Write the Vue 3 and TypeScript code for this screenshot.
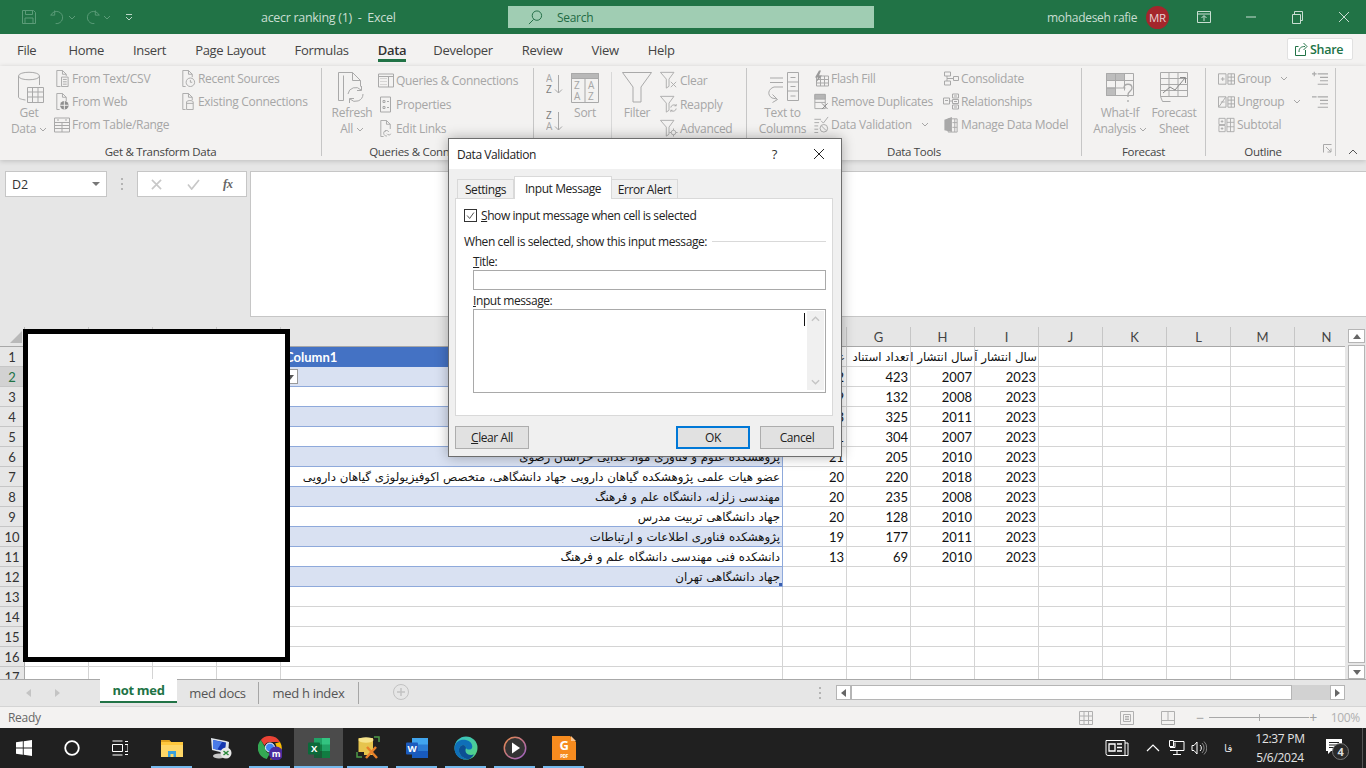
<script setup lang="ts">
interface Item {
  icon: string
  label: string
  chev?: boolean
}

interface Row {
  n: number
  text?: string
  f?: string
  g?: string
  h?: string
  i?: string
}

const tabs = ['File', 'Home', 'Insert', 'Page Layout', 'Formulas', 'Data', 'Developer', 'Review', 'View', 'Help']

const fromItems: Item[] = [
  { icon: 'i-csv', label: 'From Text/CSV' },
  { icon: 'i-web', label: 'From Web' },
  { icon: 'i-table', label: 'From Table/Range' }
]
const recentItems: Item[] = [
  { icon: 'i-recent', label: 'Recent Sources' },
  { icon: 'i-existing', label: 'Existing Connections' }
]
const queryItems: Item[] = [
  { icon: 'i-queries', label: 'Queries & Connections' },
  { icon: 'i-props', label: 'Properties' },
  { icon: 'i-links', label: 'Edit Links' }
]
const filterItems: Item[] = [
  { icon: 'i-clear', label: 'Clear' },
  { icon: 'i-reapply', label: 'Reapply' },
  { icon: 'i-advanced', label: 'Advanced' }
]
const toolItems: Item[] = [
  { icon: 'i-flash', label: 'Flash Fill' },
  { icon: 'i-dupes', label: 'Remove Duplicates' },
  { icon: 'i-valid', label: 'Data Validation', chev: true }
]
const relItems: Item[] = [
  { icon: 'i-consol', label: 'Consolidate' },
  { icon: 'i-rel', label: 'Relationships' },
  { icon: 'i-model', label: 'Manage Data Model' }
]
const outlineItems: Item[] = [
  { icon: 'i-group', label: 'Group', chev: true },
  { icon: 'i-ungroup', label: 'Ungroup', chev: true },
  { icon: 'i-subtotal', label: 'Subtotal' }
]

const letters = ['A', 'B', 'C', 'D', 'E', 'F', 'G', 'H', 'I', 'J', 'K', 'L', 'M', 'N']

const data: Row[] = [
  { n: 1, text: 'Column1', f: 'عدد', g: 'تعداد استناد', h: 'سال انتشار اولین', i: 'سال انتشار آخرین' },
  { n: 2, f: '22', g: '423', h: '2007', i: '2023' },
  { n: 3, f: '19', g: '132', h: '2008', i: '2023' },
  { n: 4, f: '23', g: '325', h: '2011', i: '2023' },
  { n: 5, f: '21', g: '304', h: '2007', i: '2023' },
  { n: 6, text: 'پژوهشکده علوم و فناوری مواد غذایی خراسان رضوی', f: '21', g: '205', h: '2010', i: '2023' },
  { n: 7, text: 'عضو هیات علمی پژوهشکده گیاهان دارویی جهاد دانشگاهی، متخصص اکوفیزیولوژی گیاهان دارویی', f: '20', g: '220', h: '2018', i: '2023' },
  { n: 8, text: 'مهندسی زلزله، دانشگاه علم و فرهنگ', f: '20', g: '235', h: '2008', i: '2023' },
  { n: 9, text: 'جهاد دانشگاهی تربیت مدرس', f: '20', g: '128', h: '2010', i: '2023' },
  { n: 10, text: 'پژوهشکده فناوری اطلاعات و ارتباطات', f: '19', g: '177', h: '2011', i: '2023' },
  { n: 11, text: 'دانشکده فنی مهندسی دانشگاه علم و فرهنگ', f: '13', g: '69', h: '2010', i: '2023' },
  { n: 12, text: 'جهاد دانشگاهی تهران' },
  { n: 13 },
  { n: 14 },
  { n: 15 },
  { n: 16 },
  { n: 17 }
]
</script>

<template>
  <div class="app">
    <!-- icon sprite -->
    <svg class="sprite" xmlns="http://www.w3.org/2000/svg">
      <symbol id="i-chev" viewBox="0 0 8 5"><path d="M1 1l3 3 3-3" fill="none" stroke="currentColor" /></symbol>
      <symbol id="i-csv" viewBox="0 0 16 18"><path d="M2.5 17.5V.5h6l4 4v2M8.5.5v4h4M2.5 17.5h4" /><path d="M7.5 7.5h7v10h-7zM9 10h4M9 12.5h4M9 15h4" /></symbol>
      <symbol id="i-web" viewBox="0 0 16 18"><path d="M2.5 17.5V.5h6l4 4v4M8.5.5v4h4M2.5 17.5h3" /><circle cx="10.5" cy="13" r="4.5" fill="#8f8f8f" stroke="none" /><path d="M6 13h9M10.5 8.5v9" stroke="#f3f2f1" /></symbol>
      <symbol id="i-table" viewBox="0 0 16 16"><path d="M.5 1.5h15v14H.5zM.5 6h15M.5 9h15M.5 12h15M8 6v9.5" /><path d="M3 3.5h2M11 3.5h2" /></symbol>
      <symbol id="i-recent" viewBox="0 0 16 18"><path d="M2.5 17.5V.5h6l4 4v3M8.5.5v4h4M2.5 17.5h3" /><circle cx="10.5" cy="13" r="4.5" /><path d="M10.5 10.5V13h2" /></symbol>
      <symbol id="i-existing" viewBox="0 0 16 18"><path d="M2.5 17.5V.5h6l4 4v3M8.5.5v4h4M2.5 17.5h3" /><path d="M6.5 9.5a3.5 1.5 0 0 1 7 0v8h-7zM6.5 11h7" /></symbol>
      <symbol id="i-queries" viewBox="0 0 16 16"><path d="M.5 1.5h15v13H.5zM.5 4h15M10.5 4v10.5" /><path d="M2 6h7M2 9h7M2 12h7" stroke-opacity=".4" /></symbol>
      <symbol id="i-props" viewBox="0 0 16 16"><path d="M2.5.5h10v15h-10zM5 4h2v2H5zM5 10h2v2H5zM9 5h2M9 11h2" /></symbol>
      <symbol id="i-links" viewBox="0 0 16 18"><path d="M2.5 17.5V.5h6l4 4v5M8.5.5v4h4M2.5 17.5h3" /><path d="M7 12.5a2 2 0 0 1 3-1l1 1M13 14.5a2 2 0 0 1-3 1l-1-1M8 11a3 3 0 0 0-2 4.5 3 3 0 0 0 3 1.5" /></symbol>
      <symbol id="i-clear" viewBox="0 0 20 20"><path d="M.5 1.5h15L10 9v8l-3 2V9z" /><path d="M12 12l6 6M18 12l-6 6" /></symbol>
      <symbol id="i-reapply" viewBox="0 0 20 20"><path d="M.5 1.5h15L10 9v8l-3 2V9z" /><path d="M12 14a3.5 3.5 0 0 1 6-2M18 15a3.5 3.5 0 0 1-6 2M18 10v2h-2M12 19v-2h2" /></symbol>
      <symbol id="i-advanced" viewBox="0 0 20 20"><path d="M.5 1.5h15L10 9v8l-3 2V9z" /><circle cx="15" cy="15" r="2.5" /><path d="M15 10.5v2M15 17.5v2M10.5 15h2M17.5 15h2" /></symbol>
      <symbol id="i-flash" viewBox="0 0 16 16"><path d="M3.5 5.5h12v10h-12zM7.5 5.5v10M11.5 5.5v10M3.5 9h12M3.5 12.5h12" /><path d="M6 0L2 7h3l-2 5 6-7H6l2-5z" fill="#9a9a9a" stroke="none" /></symbol>
      <symbol id="i-dupes" viewBox="0 0 16 18"><path d="M1.5 1.5h11v15h-11z" /><path d="M1.5 1.5h11v5h-11z" fill="#b5b5b5" /><path d="M1.5 10h11" /><path d="M9 11l6 6M15 11l-6 6" stroke="#8a8a8a" /></symbol>
      <symbol id="i-valid" viewBox="0 0 16 18"><path d="M1 3.5h7M1 7h5M1 10.5h4M1 14h4M1 17.5h4" /><path d="M8 5l2.5 2.5L15.5 1" /><circle cx="11" cy="13" r="4" /><path d="M8.5 10.5l5 5" /></symbol>
      <symbol id="i-consol" viewBox="0 0 16 16"><path d="M1.5 1.5h6v4h-6zM1.5 10.5h6v4h-6zM4 5.5V8h3M4 10.5V8" /><path d="M10.5 6h5v4h-5z" /><path d="M7 8h3" /></symbol>
      <symbol id="i-rel" viewBox="0 0 16 16"><path d="M.5 4.5h6v6h-6zM9.5.5h6v4h-6zM9.5 6h6v4h-6zM9.5 11.5h6v4h-6zM6.5 7.5h3M2 7h3M11 2.5h3M11 8h3M11 13.5h3" /></symbol>
      <symbol id="i-model" viewBox="0 0 16 18"><path d="M5 3h9.5v14H5z" /><path d="M1 4l8-3v16l-8-2z" fill="#a8a8a8" stroke="none" /><path d="M9.5 7h5M9.5 12h5M12 3v14" /></symbol>
      <symbol id="i-group" viewBox="0 0 18 16"><path d="M.5 2.5h8v11h-8zM3 8h4M5 6v4M10.5 2.5h7v11h-7zM10.5 6h7M10.5 10h7M14 2.5v11" /></symbol>
      <symbol id="i-ungroup" viewBox="0 0 18 16"><path d="M.5 2.5h8v11h-8zM3 8h4M1 13l7-10M10.5 2.5h7v11h-7zM10.5 6h7M10.5 10h7M14 2.5v11" /></symbol>
      <symbol id="i-subtotal" viewBox="0 0 18 18"><path d="M.5 1.5h7v7h-7zM.5 9.5h7v7h-7zM2.5 5h3M4 3.5v3M2.5 13h3M4 11.5v3M9.5 1.5h8v15h-8zM9.5 6h8M9.5 11h8M13.5 1.5v15" /></symbol>
      <symbol id="i-show" viewBox="0 0 14 14"><path d="M5 3h9M7 6h7M7 9h7M5 12h9M0 3h4M2 1v4" /></symbol>
      <symbol id="i-hide" viewBox="0 0 14 14"><path d="M5 3h9M7 6h7M7 9h7M5 12h9M0 3h4" /></symbol>
    </svg>

    <header class="titlebar">
      <div class="qat">
        <svg class="qat-save" viewBox="0 0 16 16"><path d="M1.5 1.5h11l2 2v11h-13zM4.5 1.5v4h7v-4M4 14.5V9h8v5.5" /></svg>
        <svg class="qat-undo" viewBox="0 0 16 16"><path d="M5 1v5H.5M1 6a6.5 6.5 0 1 1 5 9" /></svg>
        <svg class="qat-chev"><use href="#i-chev" /></svg>
        <svg class="qat-redo" viewBox="0 0 16 16"><path d="M11 1v5h4.5M15 6a6.5 6.5 0 1 0-5 9" /></svg>
        <svg class="qat-chev"><use href="#i-chev" /></svg>
        <svg class="qat-more" viewBox="0 0 8 8"><path d="M1 1.5h6M1 4l3 3 3-3" /></svg>
      </div>
      <div class="doc-name">acecr ranking (1)&nbsp; -&nbsp; Excel</div>
      <div class="search">
        <svg viewBox="0 0 16 16"><circle cx="9.5" cy="6" r="5" /><path d="M6 10l-5 5" /></svg>
        <span>Search</span>
      </div>
      <div class="user">mohadeseh rafie</div>
      <div class="avatar">MR</div>
      <div class="caption">
        <svg viewBox="0 0 14 14"><path d="M.5 1.5h13v11H.5zM.5 4h13M7 11V6M4.5 8L7 5.5 9.5 8" /></svg>
        <svg viewBox="0 0 14 14"><path d="M2 7h10" /></svg>
        <svg viewBox="0 0 14 14"><path d="M2.5 4.5h8v9h-8zM4.5 4.5v-3h8v9h-2" /></svg>
        <svg viewBox="0 0 14 14"><path d="M2 2l10 10M12 2L2 12" /></svg>
      </div>
    </header>

    <nav class="tabbar">
      <div v-for="t in tabs" :key="t" class="tab" :class="{ active: t === 'Data' }">{{ t }}</div>
      <div class="share">
        <svg viewBox="0 0 14 14"><path d="M1.5 4.5h3M1.5 4.5v9h10V8" /><path d="M5 10c0-4 2-5.5 6-5.5M9.5 1L13 4.5 9.5 8" /></svg>
        Share
      </div>
    </nav>

    <section class="ribbon">
      <div class="group g-get">
        <div class="g-body">
          <div class="big w-get">
            <svg class="big-ic" viewBox="0 0 30 35"><path d="M4.5 6c0-5 21-5 21 0v9M4.5 6c0 5 21 5 21 0M4.5 6v21c0 1.5 3 2.5 7 3" /><path d="M13.5 17.5h16v15h-16zM13.5 22h16M13.5 27h16M18.5 17.5v15M24 17.5v15" /></svg>
            <span>Get</span>
            <span>Data <svg class="chev"><use href="#i-chev" /></svg></span>
          </div>
          <div class="col w-from">
            <div v-for="it in fromItems" :key="it.label" class="item"><svg class="ic"><use :href="'#' + it.icon" /></svg>{{ it.label }}</div>
          </div>
          <div class="col">
            <div v-for="it in recentItems" :key="it.label" class="item"><svg class="ic"><use :href="'#' + it.icon" /></svg>{{ it.label }}</div>
          </div>
        </div>
        <div class="g-label">Get &amp; Transform Data</div>
      </div>

      <div class="group g-query">
        <div class="g-body">
          <div class="big w-refresh">
            <svg class="big-ic" viewBox="0 0 30 35"><path d="M6.5 30.5h-5V2.5h14l8 8v6M15.5 2.5v8h8M6.5 5.5v25" /><path d="M11 24a7.5 7.5 0 0 1 13-4M26 24a7.5 7.5 0 0 1-13 5M24.5 16v4.5H20M12.5 33v-4.5H17" /></svg>
            <span>Refresh</span>
            <span>All <svg class="chev"><use href="#i-chev" /></svg></span>
          </div>
          <div class="col tall">
            <div v-for="it in queryItems" :key="it.label" class="item"><svg class="ic"><use :href="'#' + it.icon" /></svg>{{ it.label }}</div>
          </div>
        </div>
        <div class="g-label">Queries &amp; Connections</div>
      </div>

      <div class="group g-sort">
        <div class="g-body">
          <div class="col az">
            <svg class="az-ic" viewBox="0 0 17 24"><text x="0" y="10" class="az-t">A</text><text x="0" y="21" class="az-d">Z</text><path d="M12.5 3v18M9 17.5l3.5 3.5 3.5-3.5" /></svg>
            <svg class="az-ic" viewBox="0 0 17 24"><text x="0" y="10" class="az-d">Z</text><text x="0" y="21" class="az-t">A</text><path d="M12.5 3v18M9 17.5l3.5 3.5 3.5-3.5" /></svg>
          </div>
          <div class="big w-sort">
            <svg class="big-ic" viewBox="0 0 30 35"><path d="M1.5 3.5h27v29h-27zM15 8v24.5" /><path d="M1.5 3.5h27v5h-27z" fill="#b8b8b8" /><text x="4" y="19" class="az-l">Z</text><text x="4" y="30" class="az-l">A</text><text x="18" y="19" class="az-l">A</text><text x="18" y="30" class="az-l">Z</text></svg>
            <span>Sort</span>
          </div>
          <div class="divider"></div>
          <div class="big w-filter">
            <svg class="big-ic" viewBox="0 0 30 35"><path d="M.5 2.5h29L19 17v15h-8V17z" /></svg>
            <span>Filter</span>
          </div>
          <div class="col tall filters">
            <div v-for="it in filterItems" :key="it.label" class="item"><svg class="ic ic-lg"><use :href="'#' + it.icon" /></svg>{{ it.label }}</div>
          </div>
        </div>
        <div class="g-label">Sort &amp; Filter</div>
      </div>

      <div class="group g-tools">
        <div class="g-body">
          <div class="big w-ttc">
            <svg class="big-ic" viewBox="0 0 34 35"><path d="M4 8h13M4 12.5h13M8 17h9M21.5 2.5h11v28h-11zM21.5 12h11M21.5 21h11M24.5 7.5h5M24.5 16.5h5M24.5 26h5" /><path d="M8 17c-6 2-7 8-2 11l5 1M6.5 24.5l5 5-5 3" /></svg>
            <span>Text to</span>
            <span>Columns</span>
          </div>
          <div class="col w-flash">
            <div v-for="it in toolItems" :key="it.label" class="item"><svg class="ic"><use :href="'#' + it.icon" /></svg>{{ it.label }}<svg v-if="it.chev" class="chev chev-far"><use href="#i-chev" /></svg></div>
          </div>
          <div class="col">
            <div v-for="it in relItems" :key="it.label" class="item"><svg class="ic"><use :href="'#' + it.icon" /></svg>{{ it.label }}</div>
          </div>
        </div>
        <div class="g-label">Data Tools</div>
      </div>

      <div class="group g-forecast">
        <div class="g-body">
          <div class="big w-whatif">
            <svg class="big-ic" viewBox="0 0 30 35"><path d="M1.5 3.5h27v22h-27z" /><path d="M1.5 3.5h18v7h-18zM1.5 18h9v7.5h-9z" fill="#bdbdbd" /><path d="M1.5 10.5h27M1.5 18h19M10.5 3.5v22M19.5 3.5v17" /><path d="M19 18c0-5 8-5 8 0 0 3-4 3-4 7v2M23 30v2" stroke-width="1.3" /></svg>
            <span>What-If</span>
            <span>Analysis <svg class="chev"><use href="#i-chev" /></svg></span>
          </div>
          <div class="big w-sheet">
            <svg class="big-ic" viewBox="0 0 30 35"><path d="M1.5 2.5h27v24h-27zM1.5 8.5h27M1.5 14.5h27M1.5 20.5h27M10 2.5v24M19 2.5v24" /><path d="M4 23l7-6 5 3 10-12M21 7.5h5.5V13" stroke="#8a8a8a" /><path d="M1.5 26.5l2 5h8" /></svg>
            <span>Forecast</span>
            <span>Sheet</span>
          </div>
        </div>
        <div class="g-label">Forecast</div>
      </div>

      <div class="group g-outline">
        <div class="g-body">
          <div class="col w-outline">
            <div v-for="it in outlineItems" :key="it.label" class="item"><svg class="ic ic-wide"><use :href="'#' + it.icon" /></svg>{{ it.label }}<svg v-if="it.chev" class="chev chev-out"><use href="#i-chev" /></svg></div>
          </div>
          <div class="col">
            <div class="item"><svg class="ic"><use href="#i-show" /></svg></div>
            <div class="item"><svg class="ic"><use href="#i-hide" /></svg></div>
          </div>
        </div>
        <div class="g-label label-outline">Outline</div>
        <svg class="launcher" viewBox="0 0 9 9"><path d="M.5 8.5v-8h8M3 3l5 5M8 4.5V8H4.5" /></svg>
      </div>

      <svg class="collapse" viewBox="0 0 10 6"><path d="M1 5l4-4 4 4" /></svg>
    </section>

    <section class="formula">
      <div class="namebox">D2<i class="nb-caret"></i></div>
      <div class="dots"><b></b><b></b><b></b></div>
      <div class="fx-box">
        <svg viewBox="0 0 12 12"><path d="M1 1l10 10M11 1L1 11" /></svg>
        <svg viewBox="0 0 14 12"><path d="M1 6l4 5 8-10" /></svg>
        <span>fx</span>
      </div>
      <div class="fbar"></div>
    </section>

    <section class="sheet">
      <div class="grid">
        <div class="row head">
          <div class="corner"><i></i></div>
          <div v-for="l in letters" :key="l" class="col-head">{{ l }}</div>
        </div>
        <div v-for="r in data" :key="r.n" class="row">
          <div class="row-head" :class="{ sel: r.n === 2 }">{{ r.n }}</div>
          <div class="cell"></div>
          <div class="cell"></div>
          <div class="cell"></div>
          <div class="cell"></div>
          <div
            class="cell main"
            :class="{
              thead: r.n === 1,
              band: r.n > 1 && r.n <= 12 && r.n % 2 === 0,
              plain: r.n > 1 && r.n < 12 && r.n % 2 === 1
            }"
          >
            <template v-if="r.n === 1">{{ r.text }}</template>
            <span v-else-if="r.text" class="fa">{{ r.text }}</span>
            <i v-if="r.n === 2" class="dv-drop"></i>
            <i v-if="r.n === 12" class="handle"></i>
          </div>
          <template v-if="r.n === 1">
            <div class="cell fa-head"><span>{{ r.f }}</span></div>
            <div class="cell fa-head"><span>{{ r.g }}</span></div>
            <div class="cell fa-head"><span>{{ r.h }}</span></div>
            <div class="cell fa-head"><span>{{ r.i }}</span></div>
          </template>
          <template v-else>
            <div class="cell num">{{ r.f }}</div>
            <div class="cell num">{{ r.g }}</div>
            <div class="cell num">{{ r.h }}</div>
            <div class="cell num">{{ r.i }}</div>
          </template>
          <div class="cell"></div>
          <div class="cell"></div>
          <div class="cell"></div>
          <div class="cell"></div>
          <div class="cell"></div>
        </div>
      </div>
      <div class="vscroll">
        <div class="sb-btn"><i class="tri up"></i></div>
        <div class="sb-thumb"></div>
        <div class="sb-btn"><i class="tri down"></i></div>
      </div>
    </section>

    <section class="sheettabs">
      <div class="nav"><i class="tri left"></i><i class="tri right"></i></div>
      <div class="stab on">not med</div>
      <div class="stab docs">med docs</div>
      <div class="stab hidx">med h index</div>
      <div class="plus">
        <svg viewBox="0 0 16 16"><circle cx="8" cy="8" r="7.5" /><path d="M8 4v8M4 8h8" stroke-width="1.5" /></svg>
      </div>
      <div class="dots hdots"><b></b><b></b><b></b></div>
      <div class="hscroll">
        <div class="hs-btn"><i class="tri left dark"></i></div>
        <div class="hs-thumb"></div>
        <div class="hs-track"></div>
        <div class="hs-btn"><i class="tri right dark"></i></div>
      </div>
    </section>

    <footer class="status">
      <span class="ready">Ready</span>
      <div class="views">
        <svg viewBox="0 0 14 16"><path d="M.5 1.5h13v13H.5zM.5 6h13M.5 10.5h13M5 1.5v13M9.500 1.5v13" /></svg>
        <svg viewBox="0 0 14 16"><path d="M.5 1.5h13v13H.5zM3.5 4.5h7v7h-7zM5 6.5h4M5 8h4M5 9.500h4" /></svg>
        <svg viewBox="0 0 14 16"><path d="M.5 1.5h13v13H.5zM.5 10.5h6.5V1.5M7 10.5h6.5" /></svg>
      </div>
      <div class="zoom">
        <span class="z-sign">−</span>
        <div class="z-track"><i></i></div>
        <span class="z-sign">+</span>
        <span class="z-pct">100%</span>
      </div>
    </footer>

    <div class="taskbar">
      <div class="tb-sys">
        <svg viewBox="0 0 16 16" fill="#fff"><path d="M0 2.3l6.8-1v6.3H0zM7.7 1.2L16 0v7.6H7.7zM0 8.5h6.8v6.3l-6.8-1zM7.7 8.5H16V16l-8.3-1.2z" /></svg>
      </div>
      <div class="tb-sys">
        <svg class="ring" viewBox="0 0 16 16"><circle cx="8" cy="8" r="6.8" fill="none" stroke="#fff" stroke-width="1.8" /></svg>
      </div>
      <div class="tb-sys">
        <svg class="tview" viewBox="0 0 16 16" fill="none" stroke="#fff"><path d="M.5 1h10M.5 15h10M.5 4.5h10v7H.5zM13 1.5h3M13 4.5h3v7h-3M13 14.5h3" /></svg>
      </div>
      <div class="apps">
        <div class="app-i run">
          <svg viewBox="0 0 24 24"><path d="M1 4h8l2 2h12v15H1z" fill="#ffc83d" /><path d="M1 4h8l2 2H1z" fill="#e0a21f" /><path d="M1 9h22v12H1z" fill="#ffd767" /><path d="M8 15h8v6h-2.5v-3h-3v3H8z" fill="#3aa0dc" /></svg>
        </div>
        <div class="app-i">
          <svg viewBox="0 0 24 24"><path d="M2 2l15 3 3 1-1 12-16-4z" fill="#dfe4ea" /><path d="M4 4l13 2.5-1 9L4 12.5z" fill="#1437b0" /><path d="M4 4l9 2-5 8-4-1.5z" fill="#4a7be8" /><ellipse cx="10" cy="20" rx="6" ry="2.5" fill="#c8c8c8" /><circle cx="17" cy="17" r="5.5" fill="#e8e8e8" /><path d="M14.5 15l5 4M19.5 15l-5 4" stroke="#2c8a3d" stroke-width="1.5" /></svg>
        </div>
        <div class="app-i run">
          <svg viewBox="0 0 24 24"><path d="M12 0a11.5 11.5 0 0 1 10 6H12a6 6 0 0 0-5.5 3.5L2.8 4A11.5 11.5 0 0 1 12 0z" fill="#ea4335" /><path d="M2.8 4l5 8.5a5 5 0 0 0 4 5l-3 5.5A11.5 11.5 0 0 1 2.8 4z" fill="#34a853" /><path d="M22 6a11.5 11.5 0 0 1-10 17.5l5-9a5 5 0 0 0 0-7z" fill="#fbbc05" /><circle cx="12" cy="11.5" r="4.5" fill="#4285f4" stroke="#fff" /><circle cx="18" cy="17.5" r="7" fill="#4a2c9e" /><text x="18" y="21" class="tb-m">m</text></svg>
        </div>
        <div class="app-i active">
          <svg viewBox="0 0 24 24"><path d="M7 2h16v20H7z" fill="#21a366" /><path d="M15 2h8v6.5h-8z" fill="#33c481" /><path d="M7 8.5h8V15H7z" fill="#107c41" /><path d="M7 15h8v7H7z" fill="#185c37" /><path d="M15 15h8v7h-8z" fill="#107c41" /><rect x="1" y="6.5" width="12" height="12" rx="1" fill="#0b6a3a" /><text x="7" y="16" class="tb-l">X</text></svg>
        </div>
        <div class="app-i run">
          <svg viewBox="0 0 24 24"><path d="M2.5 2H17v17H8v-3H2.5z" fill="#e6c44d" /><ellipse cx="10" cy="4" rx="7.5" ry="2.7" fill="#f6e38a" /><path d="M1 16v5h5M18 1h5v5" fill="none" stroke="#4d9a48" stroke-width="1.5" /><path d="M10 22l10-11M21 22L11 11" stroke="#e8812a" stroke-width="2.5" /></svg>
        </div>
        <div class="app-i run">
          <svg viewBox="0 0 24 24"><path d="M7 2h16v20H7z" fill="#41a5ee" /><path d="M7 8.5h16V15H7z" fill="#2b7cd3" /><path d="M7 15h16v7H7z" fill="#185abd" /><rect x="1" y="6.5" width="12" height="12" rx="1" fill="#1c5bbd" /><text x="7" y="16" class="tb-l">W</text></svg>
        </div>
        <div class="app-i run">
          <svg viewBox="0 0 24 24"><defs><linearGradient id="edgeg" x1="0" y1="0" x2="1" y2="1"><stop offset="0" stop-color="#35c1c9" /><stop offset="1" stop-color="#58d47c" /></linearGradient></defs><circle cx="12" cy="12" r="11.5" fill="url(#edgeg)" /><path d="M.5 12C1 5 7 3 12 4c5 1 7 5 6 8-1 2-5 2-6 0 0-4-6-4-7 1-1 5 4 10 10 10.2C7 25 .5 20 .5 12z" fill="#0f6fb8" /><path d="M5 13c1-5 7-5 7-1-2 5 2 8 8 6.5a11.5 11.5 0 0 1-5 4.7C9 23 4 18 5 13z" fill="#0c4f94" /></svg>
        </div>
        <div class="app-i run">
          <svg viewBox="0 0 24 24"><defs><linearGradient id="playg" x1="0" y1="0" x2="1" y2="1"><stop offset="0" stop-color="#e88a4a" /><stop offset="1" stop-color="#9a5fc7" /></linearGradient></defs><circle cx="12" cy="12" r="10.7" fill="#333" stroke="url(#playg)" stroke-width="1.5" /><path d="M9 6.5l8 5.500-8 5.500z" fill="#fff" /></svg>
        </div>
        <div class="app-i run">
          <svg viewBox="0 0 24 24"><path d="M0 0h18l6 6v18H0z" fill="#f68b1f" /><path d="M19 0l5 5h-5z" fill="#fbc28a" /><text x="12" y="14" class="tb-g">G</text><text x="12" y="21.5" class="tb-p">PDF</text></svg>
        </div>
      </div>
      <div class="tray">
        <svg class="t-news" viewBox="0 0 24 18" fill="none" stroke="#fff"><path d="M1 1.5h19v15H3a2 2 0 0 1-2-2zM20 4h3v12.5h-3" /><path d="M4 5h6v7H4zM12 5h5M12 8.5h5M12 12h5" stroke-width="1.3" /></svg>
        <svg class="t-up" viewBox="0 0 14 8" fill="none" stroke="#fff"><path d="M1 7l6-6 6 6" stroke-width="1.2" /></svg>
        <svg class="t-net" viewBox="0 0 16 16" fill="none" stroke="#fff"><path d="M4 1.5h11v9H1M1 7.5h5v-5M8 10.5v4M4 14.5h8" /><path d="M.5.5h4v6h-4z" /></svg>
        <svg class="t-vol" viewBox="0 0 16 16" fill="none" stroke="#fff"><path d="M1 5.5h2L6 2v12l-3-3.5H1zM9 5a4 4 0 0 1 0 6" /><path d="M11 3a7 7 0 0 1 0 10M13 1.5a9 9 0 0 1 0 13" stroke-opacity=".45" /></svg>
        <span class="t-fa">فا</span>
        <div class="clock"><span>12:37 PM</span><span>5/6/2024</span></div>
        <div class="notif">
          <svg viewBox="0 0 16 16"><path d="M0 0h16v12H5l-3 3v-3H0z" fill="#fff" /><path d="M3 3.5h10M3 6h10M3 8.5h7" stroke="#222" /></svg>
          <span class="badge">4</span>
        </div>
        <div class="show-desk"></div>
      </div>
    </div>

    <!-- redaction block painted over the sheet -->
    <div class="redact"></div>

    <!-- Data Validation dialog -->
    <div class="dialog">
      <div class="dlg-title">
        <span>Data Validation</span>
        <span class="dlg-help">?</span>
        <svg class="dlg-x" viewBox="0 0 12 12"><path d="M1 1l10 10M11 1L1 11" /></svg>
      </div>
      <div class="dlg-tabs">
        <div class="dtab">Settings</div>
        <div class="dtab cur">Input Message</div>
        <div class="dtab">Error Alert</div>
      </div>
      <div class="dlg-panel">
        <div class="chk-row">
          <div class="chk"><svg viewBox="0 0 13 13"><path d="M2.5 6.5l3 3.5 5-7" /></svg></div>
          <span><u>S</u>how input message when cell is selected</span>
        </div>
        <div class="legend"><span>When cell is selected, show this input message:</span><i></i></div>
        <div class="fld-label"><u>T</u>itle:</div>
        <div class="inp"></div>
        <div class="fld-label msg"><u>I</u>nput message:</div>
        <div class="area">
          <i class="caret"></i>
          <div class="area-sb">
            <svg viewBox="0 0 10 6"><path d="M1 5l4-4 4 4" /></svg>
            <svg viewBox="0 0 10 6"><path d="M1 1l4 4 4-4" /></svg>
          </div>
        </div>
      </div>
      <div class="dlg-foot">
        <div class="btn"><u>C</u>lear All</div>
        <div class="btn ok">OK</div>
        <div class="btn">Cancel</div>
      </div>
    </div>
  </div>
</template>

<style>
html,
body {
  margin: 0;
  overflow: hidden;
}
</style>

<style scoped>
.app {
  position: relative;
  display: flex;
  flex-direction: column;
  width: 1366px;
  height: 768px;
  overflow: hidden;
  font: 12px "Open Sans", "Noto Sans", sans-serif;
  letter-spacing: -0.3px;
  color: #444;
  background: #e6e6e6;
}
.sprite {
  display: none;
}
svg {
  display: block;
  flex: none;
}

/* title bar */
.titlebar {
  display: flex;
  align-items: center;
  height: 34px;
  flex: none;
  background: #217346;
}
.titlebar > * {
  flex: none;
}
.titlebar svg {
  fill: none;
  stroke: currentColor;
}
.qat {
  display: flex;
  align-items: center;
  width: 261px;
  color: #5c9c79;
}
.qat-save {
  width: 16px;
  height: 16px;
  margin-left: 21px;
}
.qat-undo {
  width: 15px;
  height: 16px;
  margin-left: 13px;
}
.qat-chev {
  width: 8px;
  height: 5px;
  margin-left: 3px;
}
.qat-redo {
  width: 15px;
  height: 16px;
  margin-left: 9px;
}
.qat-more {
  width: 8px;
  height: 8px;
  margin-left: 14px;
  color: #bcd6c7;
}
.doc-name {
  width: 247px;
  font-size: 12.5px;
  color: #c9ded2;
}
.search {
  display: flex;
  align-items: center;
  width: 366px;
  height: 22px;
  background: #a0cdb3;
  color: #1f6b43;
}
.search svg {
  width: 15px;
  height: 15px;
  margin-left: 20px;
}
.search span {
  margin-left: 14px;
}
.user {
  margin-left: 173px;
  width: 99px;
  color: #c9ded2;
}
.avatar {
  display: flex;
  align-items: center;
  justify-content: center;
  width: 23px;
  height: 23px;
  border-radius: 50%;
  background: #a4262c;
  color: #e9d3d3;
  font-size: 11.5px;
}
.caption {
  display: flex;
  margin-left: 28px;
  color: #c9ded2;
}
.caption svg {
  width: 14px;
  height: 14px;
  margin-right: 32.5px;
}

/* tabs */
.tabbar {
  display: flex;
  align-items: flex-start;
  height: 32px;
  flex: none;
  padding-left: 17px;
  background: #f3f2f1;
}
.tab {
  position: relative;
  margin-right: 29px;
  padding-top: 7px;
  height: 28px;
  box-sizing: border-box;
  font-size: 13px;
  color: #444;
}
.tab:first-child {
  margin-right: 32px;
}
.tab.active {
  margin-right: 27px;
  font-weight: 600;
  color: #333;
}
.tab.active::after {
  content: "";
  position: absolute;
  left: 0;
  right: 0;
  top: 25px;
  height: 3px;
  background: #217346;
}
.share {
  display: flex;
  align-items: center;
  gap: 2px;
  margin: 4px 13px 0 auto;
  width: 66px;
  height: 22px;
  box-sizing: border-box;
  padding-left: 6px;
  background: #fff;
  border: 1px solid #e1e1e1;
  border-radius: 2px;
  font-size: 12.5px;
  font-weight: 600;
  color: #217346;
}
.share svg {
  width: 14px;
  height: 14px;
  fill: none;
  stroke: #217346;
}

/* ribbon */
.ribbon {
  position: relative;
  z-index: 1;
  display: flex;
  height: 94px;
  flex: none;
  background: #f3f2f1;
  box-shadow: 0 1px 5px rgba(0, 0, 0, 0.18);
  color: #a6a6a6;
}
.ribbon svg {
  fill: none;
  stroke: #a9a9a9;
}
.group {
  position: relative;
  display: flex;
  flex-direction: column;
  height: 88px;
  margin-top: 2px;
  box-sizing: border-box;
  border-right: 1px solid #c6c6c6;
}
.g-get {
  width: 322px;
  padding-left: 9px;
}
.g-query {
  width: 212px;
  padding-left: 5px;
}
.g-sort {
  width: 213px;
  padding-left: 12px;
}
.g-tools {
  width: 335px;
  padding-left: 5px;
}
.g-forecast {
  width: 124px;
  padding-left: 8px;
}
.g-outline {
  width: 130px;
  padding-left: 12px;
}
.g-body {
  display: flex;
  height: 76px;
  flex: none;
}
.g-label {
  margin-left: -12px;
  text-align: center;
  line-height: 16px;
  font-size: 11.5px;
  color: #444;
}
.g-get .g-label {
  margin-left: -9px;
}
.g-query .g-label,
.g-tools .g-label {
  margin-left: -5px;
}
.g-forecast .g-label {
  margin-left: -8px;
}
.label-outline {
  padding-right: 15px;
}
.launcher {
  position: absolute;
  right: 3px;
  bottom: 3px;
  width: 9px;
  height: 9px;
}
.collapse {
  position: absolute;
  left: 1348px;
  top: 83px;
  width: 10px;
  height: 6px;
}
.ribbon .collapse {
  stroke: #555;
}
.big {
  display: flex;
  flex-direction: column;
  align-items: center;
  padding-top: 2px;
  line-height: 16px;
}
.big span {
  display: flex;
  align-items: center;
  gap: 3px;
  white-space: nowrap;
}
.big-ic {
  width: 30px;
  height: 35px;
}
.chev {
  width: 8px;
  height: 5px;
}
.chev-far {
  margin-left: 7px;
}
.chev-out {
  margin-left: 7px;
}
.w-get {
  width: 40px;
  margin-right: 5px;
}
.w-refresh {
  width: 50px;
  margin-right: 1px;
}
.w-sort {
  width: 40px;
}
.w-filter {
  width: 40px;
  margin-right: 3px;
}
.w-ttc {
  width: 61px;
}
.w-ttc .big-ic {
  width: 34px;
}
.w-whatif {
  width: 60px;
}
.w-sheet {
  width: 48px;
}
.w-from {
  width: 126px;
}
.w-flash {
  width: 130px;
}
.w-outline {
  width: 94px;
}
.col {
  display: flex;
  flex-direction: column;
  margin-top: -1px;
}
.col.tall {
  margin-top: 0;
}
.item {
  display: flex;
  align-items: center;
  gap: 2px;
  height: 23px;
  white-space: nowrap;
}
.tall .item {
  height: 24px;
}
.ic {
  width: 16px;
  height: 17px;
}
.ic-lg {
  width: 18px;
  height: 18px;
}
.ic-wide {
  width: 17px;
  height: 16px;
}
.az {
  width: 19px;
  gap: 13px;
  padding-top: 5px;
  height: 62px;
}
.az-ic {
  width: 17px;
  height: 24px;
}
.az-t,
.az-d,
.az-l {
  font: 10px "Open Sans", sans-serif;
  letter-spacing: 0;
  stroke: none;
  fill: #a6a6a6;
}
.az-d {
  fill: #7c7c7c;
}
.divider {
  width: 1px;
  height: 73px;
  margin: 4px 5px 0 6px;
  background: #d8d8d8;
}

/* formula bar */
.formula {
  display: flex;
  align-items: flex-start;
  height: 167px;
  flex: none;
  padding-top: 11px;
  box-sizing: border-box;
  background: #e6e6e6;
}
.namebox {
  display: flex;
  align-items: center;
  justify-content: space-between;
  width: 102px;
  height: 26px;
  margin-left: 5px;
  padding: 0 6px;
  box-sizing: border-box;
  background: #fff;
  border: 1px solid #c6c6c6;
  font-size: 12.5px;
  letter-spacing: 0;
  color: #333;
}
.nb-caret {
  border: 4px solid transparent;
  border-top: 4px solid #777;
  border-bottom: 0;
}
.dots {
  display: flex;
  flex-direction: column;
  gap: 3px;
  margin: 7px 14px 0 14px;
}
.dots b {
  width: 2px;
  height: 2px;
  background: #b4b4b4;
}
.fx-box {
  display: flex;
  align-items: center;
  width: 110px;
  height: 26px;
  box-sizing: border-box;
  padding-left: 13px;
  background: #fff;
  border: 1px solid #c6c6c6;
}
.fx-box svg {
  fill: none;
  stroke: #c8c8c8;
  stroke-width: 1.8;
  width: 11px;
  height: 11px;
  margin-right: 25px;
}
.fx-box svg + svg {
  width: 13px;
  margin-right: 23px;
}
.fx-box span {
  font: italic 700 12.5px "Liberation Serif", serif;
  color: #666;
}
.fbar {
  flex: 1;
  height: 146px;
  margin-left: 3px;
  background: #fff;
  border: 1px solid #c6c6c6;
  border-right: 0;
  box-sizing: border-box;
}

/* sheet */
.sheet {
  display: flex;
  height: 352px;
  flex: none;
  overflow: hidden;
  background: #e6e6e6;
}
.grid {
  width: 1345px;
  overflow: hidden;
  background: #fff;
  font: 13px Lato, "Liberation Sans", sans-serif;
  letter-spacing: 0;
  color: #111;
}
.row {
  display: grid;
  grid-template-columns: 25px repeat(4, 64px) 502px repeat(9, 64px);
  height: 20px;
}
.head {
  background: #e6e6e6;
}
.corner {
  position: relative;
  border-right: 1px solid #b6b6b6;
  border-bottom: 1px solid #a8a8a8;
  box-sizing: border-box;
}
.corner i {
  position: absolute;
  right: 2px;
  bottom: 3px;
  border-style: solid;
  border-width: 0 0 12px 12px;
  border-color: transparent transparent #b9b9b9 transparent;
}
.col-head {
  display: flex;
  align-items: center;
  justify-content: center;
  box-sizing: border-box;
  border-right: 1px solid #c6c6c6;
  border-bottom: 1px solid #a8a8a8;
  color: #444;
}
.row-head {
  display: flex;
  align-items: center;
  justify-content: center;
  box-sizing: border-box;
  background: #e6e6e6;
  border-right: 1px solid #a8a8a8;
  border-bottom: 1px solid #c6c6c6;
  color: #333;
}
.row-head.sel {
  background: #d2d2d2;
  color: #217346;
}
.cell {
  position: relative;
  display: flex;
  align-items: center;
  justify-content: flex-end;
  min-width: 0;
  overflow: hidden;
  box-sizing: border-box;
  padding-right: 2px;
  border-right: 1px solid #d4d4d4;
  border-bottom: 1px solid #d4d4d4;
  white-space: nowrap;
}
.main {
  overflow: visible;
}
.thead {
  justify-content: flex-start;
  padding-left: 4px;
  background: #4472c4;
  border-right-color: #4472c4;
  border-bottom-color: #4472c4;
  color: #fff;
  font-weight: 700;
}
.band {
  background: #d9e1f2;
  border-bottom-color: #8ea9db;
  border-right-color: #8ea9db;
}
.plain {
  border-bottom-color: #8ea9db;
  border-right-color: #8ea9db;
}
.fa {
  direction: rtl;
  font: 11.8px "DejaVu Sans", sans-serif;
  color: #111;
}
.fa-head {
  direction: rtl;
  justify-content: flex-start;
  padding: 0 1px 0 0;
  font: 11.8px "DejaVu Sans", sans-serif;
}
.dv-drop {
  position: absolute;
  left: 2px;
  top: 2px;
  width: 15px;
  height: 15px;
  box-sizing: border-box;
  background: #fff;
  border: 1px solid #9a9a9a;
}
.dv-drop::after {
  content: "";
  position: absolute;
  left: 2px;
  top: 5px;
  border: 4px solid transparent;
  border-top: 5px solid #555;
  border-bottom: 0;
}
.handle {
  position: absolute;
  right: 0;
  bottom: 0;
  width: 3px;
  height: 3px;
  background: #3a5fb0;
}
.vscroll {
  display: flex;
  flex-direction: column;
  width: 17px;
  margin-left: 3px;
  padding-top: 2px;
}
.sb-btn {
  display: flex;
  align-items: center;
  justify-content: center;
  height: 14px;
  flex: none;
  box-sizing: border-box;
  background: #fff;
  border: 1px solid #b5b5b5;
}
.sb-thumb {
  flex: 1;
  margin: 2px 0;
  background: #fff;
  border: 1px solid #b5b5b5;
}
.tri {
  display: block;
  border: 4px solid transparent;
}
.tri.up {
  border-top: 0;
  border-bottom: 5px solid #666;
}
.tri.down {
  border-bottom: 0;
  border-top: 5px solid #666;
}
.tri.left {
  border-left: 0;
  border-right: 5px solid #c4c4c4;
}
.tri.right {
  border-right: 0;
  border-left: 5px solid #c4c4c4;
}
.tri.left.dark {
  border-right-color: #666;
}
.tri.right.dark {
  border-left-color: #666;
}

/* sheet tabs */
.sheettabs {
  display: flex;
  align-items: flex-start;
  height: 27px;
  flex: none;
  box-sizing: border-box;
  background: #e6e6e6;
  border-top: 1px solid #a8a8a8;
}
.nav {
  display: flex;
  align-items: center;
  width: 100px;
  height: 25px;
  padding-left: 26px;
  gap: 24px;
  box-sizing: border-box;
}
.stab {
  display: flex;
  align-items: center;
  justify-content: center;
  height: 22px;
  margin-top: 2px;
  box-sizing: border-box;
  font-size: 13px;
  color: #555;
  border-right: 1px solid #a6a6a6;
}
.stab.on {
  width: 77px;
  height: 24px;
  margin-top: -1px;
  background: #fff;
  border-right: 0;
  border-bottom: 2px solid #217346;
  color: #217346;
  font-weight: 700;
}
.stab.docs {
  width: 82px;
}
.stab.hidx {
  width: 100px;
}
.plus {
  margin: 4px 0 0 34px;
}
.plus svg {
  width: 16px;
  height: 16px;
  fill: none;
  stroke: #c2c2c2;
}
.hdots {
  margin: 7px 0 0 410px;
  gap: 3px;
}
.hscroll {
  display: flex;
  width: 509px;
  height: 15px;
  margin: 5px 0 0 15px;
}
.hs-btn {
  display: flex;
  align-items: center;
  justify-content: center;
  width: 15px;
  height: 15px;
  flex: none;
  box-sizing: border-box;
  background: #fff;
  border: 1px solid #b5b5b5;
}
.hs-thumb {
  width: 441px;
  background: #fff;
  border: 1px solid #b5b5b5;
  box-sizing: border-box;
}
.hs-track {
  flex: 1;
  background: #d2d2d2;
}

/* status bar */
.status {
  display: flex;
  align-items: center;
  height: 22px;
  flex: none;
  background: #f3f2f1;
  border-top: 1px solid #d4d4d4;
  box-sizing: border-box;
}
.ready {
  margin-left: 8px;
  color: #666;
}
.views {
  display: flex;
  gap: 27px;
  margin-left: auto;
}
.views svg {
  width: 14px;
  height: 16px;
  fill: none;
  stroke: #b0b0b0;
}
.zoom {
  display: flex;
  align-items: center;
  margin: 0 6px 0 21px;
  color: #9c9c9c;
}
.z-sign {
  width: 9px;
  font-size: 14px;
  text-align: center;
  color: #a0a0a0;
}
.z-track {
  position: relative;
  width: 100px;
  height: 1px;
  margin: 0 0 0 4px;
  background: #a8a8a8;
}
.z-track i {
  position: absolute;
  left: 50px;
  top: -3px;
  width: 1px;
  height: 7px;
  background: #a8a8a8;
}
.z-pct {
  margin-left: 13px;
  color: #b0b0b0;
}

/* taskbar */
.taskbar {
  display: flex;
  height: 40px;
  flex: none;
  background: #202020;
  color: #fff;
}
.tb-sys {
  display: flex;
  align-items: center;
  justify-content: center;
  width: 48px;
}
.tb-sys svg {
  width: 16px;
  height: 16px;
}
.tb-sys .tview {
  height: 20px;
}
.apps {
  display: flex;
  margin-left: 3px;
}
.app-i {
  position: relative;
  display: flex;
  align-items: center;
  justify-content: center;
  width: 49px;
  height: 40px;
}
.app-i svg {
  width: 24px;
  height: 24px;
}
.app-i.active {
  background: #4b4b4b;
}
.app-i.run::after,
.app-i.active::after {
  content: "";
  position: absolute;
  left: 4px;
  right: 4px;
  bottom: 0;
  height: 2px;
  background: #76b9ed;
}
.app-i.active::after {
  left: 0;
  right: 0;
}
.tb-m {
  font: 700 9px "Open Sans", sans-serif;
  fill: #fff;
  text-anchor: middle;
}
.tb-l {
  font: 700 9.5px "Open Sans", sans-serif;
  fill: #fff;
  text-anchor: middle;
}
.tb-g {
  font: 700 13px "Open Sans", sans-serif;
  fill: #fff;
  text-anchor: middle;
}
.tb-p {
  font: 700 4.5px "Open Sans", sans-serif;
  fill: #fff;
  text-anchor: middle;
}
.tray {
  display: flex;
  align-items: center;
  margin-left: auto;
}
.t-news {
  width: 24px;
  height: 18px;
  margin-right: 17px;
}
.t-up {
  width: 14px;
  height: 8px;
  margin-right: 9px;
}
.t-net {
  width: 16px;
  height: 16px;
  margin-right: 6px;
}
.t-vol {
  width: 16px;
  height: 16px;
  margin-right: 17px;
}
.t-fa {
  width: 12px;
  font: 11px "DejaVu Sans", sans-serif;
  color: #ddd;
}
.clock {
  display: flex;
  flex-direction: column;
  align-items: center;
  width: 60px;
  margin-left: 14px;
  line-height: 19px;
  color: #e4e4e4;
}
.notif {
  position: relative;
  width: 52px;
  height: 24px;
}
.notif svg {
  position: absolute;
  left: 16px;
  top: 3px;
  width: 16px;
  height: 16px;
}
.badge {
  position: absolute;
  left: 22px;
  top: 7px;
  width: 15px;
  height: 15px;
  border: 1px solid #777;
  border-radius: 50%;
  background: #2a2a2a;
  text-align: center;
  line-height: 15px;
  font-size: 11px;
  font-weight: 700;
  color: #ddd;
}
.show-desk {
  width: 3px;
  height: 40px;
  border-left: 1px solid #555;
}

/* redaction */
.redact {
  position: absolute;
  z-index: 2;
  left: 23px;
  top: 329px;
  width: 267px;
  height: 333px;
  box-sizing: border-box;
  background: #fff;
  border: 5px solid #000;
}

/* dialog */
.dialog {
  position: absolute;
  z-index: 3;
  left: 448px;
  top: 138px;
  display: flex;
  flex-direction: column;
  width: 394px;
  height: 319px;
  box-sizing: border-box;
  background: #f0f0f0;
  border: 1px solid #6d6d6d;
  box-shadow: 0 0 12px rgba(0, 0, 0, 0.3);
  color: #222;
  letter-spacing: -0.42px;
}
.dlg-title {
  display: flex;
  align-items: center;
  height: 30px;
  flex: none;
  padding-left: 8px;
  background: #fff;
}
.dlg-help {
  margin-left: auto;
  font-size: 13px;
  color: #333;
}
.dlg-x {
  width: 12px;
  height: 12px;
  margin: 0 16px 0 36px;
  fill: none;
  stroke: #222;
}
.dlg-tabs {
  display: flex;
  align-items: flex-end;
  height: 29px;
  flex: none;
  padding-left: 8px;
}
.dtab {
  display: flex;
  align-items: center;
  justify-content: center;
  height: 20px;
  box-sizing: border-box;
  margin-bottom: -1px;
  width: 57px;
  background: #f0f0f0;
  border: 1px solid #d9d9d9;
  border-bottom: 0;
}
.dtab.cur {
  position: relative;
  z-index: 1;
  width: 98px;
  height: 23px;
  background: #fff;
}
.dtab:last-child {
  width: 66px;
  border-left: 0;
}
.dlg-panel {
  height: 218px;
  flex: none;
  margin-left: 6px;
  width: 378px;
  box-sizing: border-box;
  padding: 9px 6px 0 8px;
  background: #fff;
  border: 1px solid #d9d9d9;
}
.chk-row {
  display: flex;
  align-items: center;
  gap: 4px;
  height: 14px;
}
.chk {
  width: 13px;
  height: 13px;
  box-sizing: border-box;
  border: 1px solid #333;
  background: #fff;
}
.chk svg {
  width: 11px;
  height: 11px;
  fill: none;
  stroke: #333;
}
.legend {
  display: flex;
  align-items: center;
  gap: 5px;
  height: 16px;
  margin-top: 11px;
  white-space: nowrap;
}
.legend i {
  flex: 1;
  height: 1px;
  background: #d9d9d9;
}
.fld-label {
  height: 16px;
  line-height: 18px;
  margin: 4px 0 0 9px;
}
.fld-label.msg {
  margin-top: 2px;
}
.inp {
  height: 20px;
  margin: 1px 0 0 9px;
  box-sizing: border-box;
  border: 1px solid #a9a9a9;
}
.area {
  display: flex;
  justify-content: flex-end;
  height: 84px;
  margin: 1px 0 0 9px;
  box-sizing: border-box;
  border: 1px solid #a9a9a9;
  padding: 1px;
}
.caret {
  width: 1px;
  height: 13px;
  margin: 2px 2px 0 0;
  background: #111;
}
.area-sb {
  display: flex;
  flex-direction: column;
  justify-content: space-between;
  align-items: center;
  width: 17px;
  height: 79px;
  padding: 5px 0;
  box-sizing: border-box;
  background: #f0f0f0;
}
.area-sb svg {
  width: 9px;
  height: 6px;
  fill: none;
  stroke: #c4c4c4;
  stroke-width: 1.5;
}
.dlg-foot {
  display: flex;
  margin-top: 10px;
  padding: 0 7px 0 6px;
}
.btn {
  display: flex;
  align-items: center;
  justify-content: center;
  width: 74px;
  height: 23px;
  box-sizing: border-box;
  background: #e1e1e1;
  border: 1px solid #adadad;
}
.btn.ok {
  margin: 0 10px 0 auto;
  border: 2px solid #0078d7;
}
</style>
